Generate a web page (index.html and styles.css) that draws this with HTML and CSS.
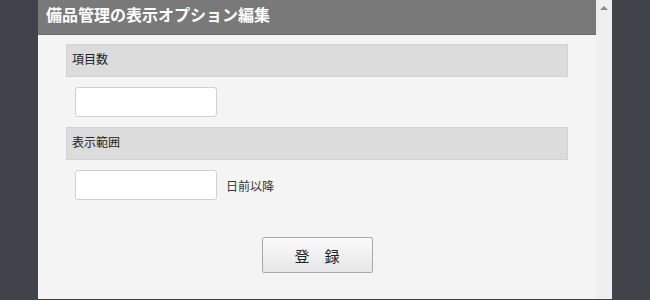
FILE: index.html
```html
<!DOCTYPE html>
<html lang="ja">
<head>
    <meta charset="UTF-8">
    <meta name="viewport" content="width=device-width, initial-scale=1.0">
    <title>備品管理の表示オプション編集</title>
    <link rel="stylesheet" href="styles.css">
</head>
<body>
    <div class="dialog">
        <div class="main">
            <div class="header">備品管理の表示オプション編集</div>
            <div class="content">
                <div class="section-title">項目数</div>
                <div class="field-row">
                    <input type="text" class="text-input">
                </div>
                <div class="section-title">表示範囲</div>
                <div class="field-row">
                    <input type="text" class="text-input">
                    <span class="unit">日前以降</span>
                </div>
                <div class="actions">
                    <button class="submit-button">登　録</button>
                </div>
            </div>
        </div>
        <div class="scrollbar">
            <span class="arrow-up"></span>
        </div>
    </div>
</body>
</html>
```

FILE: styles.css
```css
html, body {
    margin: 0;
    padding: 0;
}
body {
    background-color: #40434a;
    font-family: 'Liberation Sans', 'Noto Sans CJK JP', sans-serif;
    height: 300px;
    overflow: hidden;
}
.dialog {
    display: flex;
    width: 574px;
    height: 299px;
    margin-left: 38px;
    background-color: #f4f4f4;
}
.main {
    flex: 1;
}
.header {
    height: 35px;
    box-sizing: border-box;
    background-color: #797979;
    border-bottom: 1px solid #6a6a6a;
    color: #fff;
    font-size: 16px;
    font-weight: bold;
    line-height: 32px;
    padding-left: 8px;
}
.content {
    padding: 9px 28px 0 28px;
}
.section-title {
    height: 33px;
    box-sizing: border-box;
    background-color: #dcdcdc;
    border: 1px solid #d2d2d2;
    font-size: 12px;
    color: #222;
    line-height: 31px;
    padding-left: 5px;
}
.field-row {
    display: flex;
    align-items: center;
    gap: 9px;
    padding: 10px 0 10px 9px;
}
.text-input {
    width: 142px;
    height: 30px;
    box-sizing: border-box;
    border: 1px solid #d0d0d0;
    border-radius: 3px;
    background-color: #fff;
    margin: 0;
}
.unit {
    font-size: 12px;
    color: #333;
}
.actions {
    display: flex;
    justify-content: center;
    padding-top: 27px;
}
.submit-button {
    width: 111px;
    height: 36px;
    border: 1px solid #a8a8a8;
    border-radius: 2px;
    background: linear-gradient(#fbfbfb, #e6e6e6);
    font-family: 'Noto Sans CJK JP', sans-serif;
    font-size: 15px;
    color: #222;
    cursor: pointer;
}
.scrollbar {
    width: 16px;
    background-color: #efefef;
    display: flex;
    justify-content: center;
    padding-top: 6px;
    box-sizing: border-box;
}
.arrow-up {
    width: 0;
    height: 0;
    border-left: 4px solid transparent;
    border-right: 4px solid transparent;
    border-bottom: 4px solid #8a8a8a;
}
```
